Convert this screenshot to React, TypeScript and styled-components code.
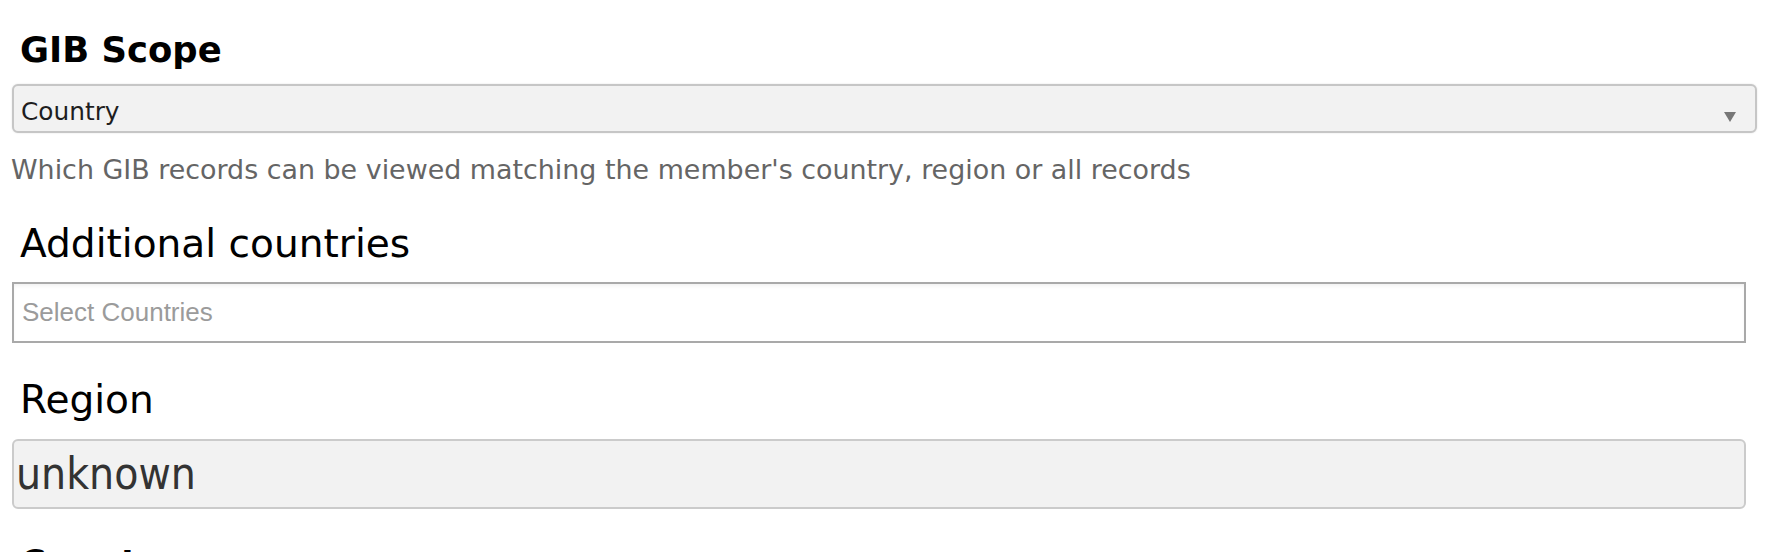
import React from "react";
import styled, { createGlobalStyle } from "styled-components";

const GlobalStyle = createGlobalStyle`
  html, body {
    margin: 0;
    padding: 0;
    background: #ffffff;
  }
  body {
    font-family: "DejaVu Sans", Verdana, sans-serif;
    overflow: hidden;
  }
  * { box-sizing: border-box; }
`;

const Form = styled.form`
  display: flex;
  flex-direction: column;
  width: 1757px;
  padding: 30px 0 0 12px;
`;

const Field = styled.div<{ $top?: number }>`
  display: flex;
  flex-direction: column;
  margin-top: ${(p) => p.$top ?? 0}px;
`;

const Label = styled.label<{ $strong?: boolean }>`
  display: block;
  padding-left: 8px;
  color: #000;
  font-family: "DejaVu Sans", Verdana, sans-serif;
  font-weight: ${(p) => (p.$strong ? 700 : 400)};
  font-size: ${(p) => (p.$strong ? "35.4px" : "39.1px")};
  line-height: ${(p) => (p.$strong ? "40px" : "44px")};
  margin-bottom: ${(p) => (p.$strong ? "14px" : "16.3px")};
  white-space: nowrap;
`;

const SelectBox = styled.div`
  display: flex;
  align-items: flex-start;
  justify-content: space-between;
  width: 100%;
  height: 49px;
  border: 2px solid #c6c6c6;
  border-radius: 6px;
  background: #f2f2f2;
  box-shadow: 0 0 2px rgba(0, 0, 0, 0.12);
`;

const SelectValue = styled.span`
  padding: 6px 0 0 7px;
  font-family: "DejaVu Sans", Verdana, sans-serif;
  font-size: 24.8px;
  line-height: 39px;
  color: #1e1e1e;
`;

const Arrow = styled.svg`
  flex: none;
  margin: 26px 19px 0 0;
`;

const Help = styled.p`
  margin: 21px 0 0 -1px;
  font-family: "DejaVu Sans", Verdana, sans-serif;
  font-size: 26.9px;
  line-height: 32px;
  color: #656565;
  white-space: nowrap;
`;

const MultiInput = styled.div`
  width: calc(100% - 11px);
  height: 61px;
  border: 2px solid #a9a9a9;
  background: #ffffff;
  box-shadow: inset 0 3px 5px -2px rgba(0, 0, 0, 0.08);
  padding-left: 8px;
`;

const Placeholder = styled.span`
  font-family: "Liberation Sans", Arial, sans-serif;
  font-size: 26px;
  line-height: 57px;
  color: #9b9b9b;
`;

const ReadOnlyBox = styled.div`
  width: calc(100% - 11px);
  height: 70px;
  border: 2px solid #cbcbcb;
  border-radius: 6px;
  background: #f2f2f2;
  padding-left: 2px;
`;

const ReadOnlyValue = styled.span`
  font-family: "DejaVu Sans Condensed", "DejaVu Sans", sans-serif;
  font-size: 44px;
  line-height: 66px;
  color: #333;
`;

export default function App() {
  return (
    <>
      <GlobalStyle />
      <Form>
        <Field>
          <Label $strong>GIB Scope</Label>
          <SelectBox>
            <SelectValue>Country</SelectValue>
            <Arrow width="12" height="10" viewBox="0 0 12 10" aria-hidden="true">
              <polygon points="0,0 12,0 6,10" fill="#777777" />
            </Arrow>
          </SelectBox>
          <Help>Which GIB records can be viewed matching the member's country, region or all records</Help>
        </Field>
        <Field $top={36}>
          <Label>Additional countries</Label>
          <MultiInput>
            <Placeholder>Select Countries</Placeholder>
          </MultiInput>
        </Field>
        <Field $top={35}>
          <Label>Region</Label>
          <ReadOnlyBox>
            <ReadOnlyValue>unknown</ReadOnlyValue>
          </ReadOnlyBox>
        </Field>
        <Field $top={34}>
          <Label $strong>Country</Label>
        </Field>
      </Form>
    </>
  );
}
